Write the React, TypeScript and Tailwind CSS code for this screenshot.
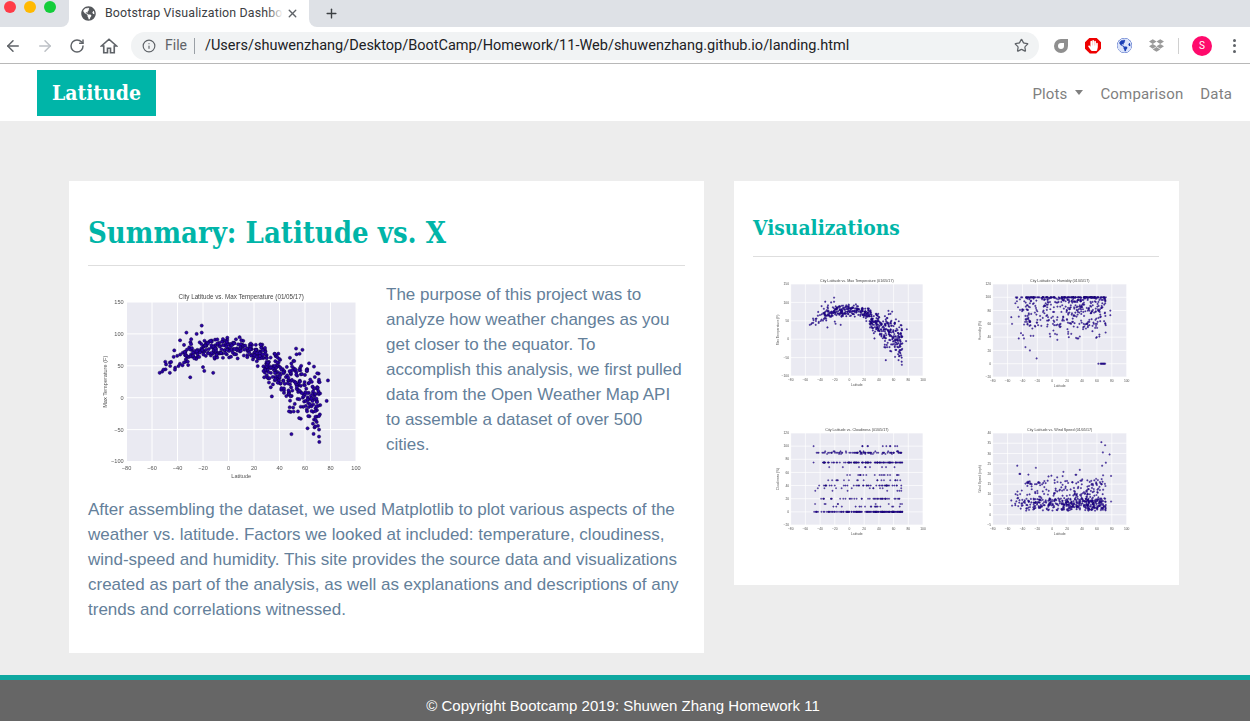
import React from "react";
import { ArrowLeft, ArrowRight, RotateCw, Info, Star, X, Plus } from "lucide-react";
import { FaGlobeAmericas, FaHandPaper, FaDropbox } from "react-icons/fa";

function rng(seed: number) {
  let a = seed;
  return () => {
    a |= 0;
    a = (a + 0x6d2b79f5) | 0;
    let t = Math.imul(a ^ (a >>> 15), 1 | a);
    t = (t + Math.imul(t ^ (t >>> 7), 61 | t)) ^ t;
    return ((t ^ (t >>> 14)) >>> 0) / 4294967296;
  };
}
type P = [number, number];
function gauss(r: () => number) {
  return r() + r() + r() + r() - 2;
}
function lats(r: () => number, n: number) {
  const out: number[] = [];
  for (let i = 0; i < n; i++) {
    const u = r();
    if (u < 0.05) out.push(-50 + r() * 17);
    else if (u < 0.35) out.push(-36 + r() * 46);
    else if (u < 0.6) out.push(10 + r() * 28);
    else out.push(38 + r() * 34);
  }
  return out;
}
const tempCurve: P[] = [[-56, 38], [-45, 55], [-35, 68], [-20, 76], [0, 79], [15, 78], [25, 68], [35, 47], [45, 28], [55, 20], [65, 5], [73, -8]];
function curve(x: number) {
  for (let i = 1; i < tempCurve.length; i++) {
    const [a, b] = tempCurve[i - 1];
    const [c, d] = tempCurve[i];
    if (x <= c) return b + ((x - a) / (c - a)) * (d - b);
  }
  return -10;
}
function tempData(): P[] {
  const r = rng(7);
  const pts: P[] = lats(r, 500).map((x) => {
    const s = x < 22 ? 15 : x < 45 ? 24 : 46;
    return [x, curve(x) + gauss(r) * s];
  });
  return pts.concat([[-21, 113], [-33, 102], [-25, 100], [-21, 102], [-38, 90], [53, 77], [58, 75], [78, 27], [77, -5], [71, -61], [-30, 32], [-12, 39], [-19, 42], [-20, 48], [-54, 39], [-52, 41], [-51, 44], [-46, 39], [-46, 55], [-45, 56], [-43, 64], [-42, 44], [34, 2], [48, -15], [57, 50], [71, -50], [68, -45], [62, -48]]);
}
function humidityData(): P[] {
  const r = rng(11);
  const pts: P[] = lats(r, 500).map((x) => {
    const u = r();
    const h = u < 0.22 ? 100 : u < 0.85 ? 100 - Math.pow(r(), 1.4) * 45 : 100 - r() * 65;
    return [x, Math.round(h)];
  });
  return pts.concat([[62, 0], [65, 0], [66, 0], [67, 0], [68, 0], [69, 0], [70, 0], [71, 0], [-21, 8], [-30, 20], [-36, 25], [-45, 38], [-42, 46], [-38, 38], [-55, 70], [-54, 60], [-47, 100], [-46, 85], [78, 73], [78, 80], [72, 100]]);
}
function cloudData(): P[] {
  const r = rng(23);
  const vals = [0, 0, 0, 0, 0, 0, 0, 0, 8, 12, 20, 20, 20, 32, 36, 40, 40, 40, 48, 56, 68, 75, 75, 75, 75, 75, 75, 90, 90, 90, 90, 92, 88, 100];
  return lats(r, 520).map((x) => [x, vals[Math.floor(r() * vals.length)]]);
}
function windData(): P[] {
  const r = rng(31);
  const pts: P[] = lats(r, 540).map((x) => {
    const u = r();
    const w = u < 0.58 ? 2 + r() * 6 : u < 0.95 ? 4 + r() * 13 : 10 + r() * 10;
    return [x, w];
  });
  return pts.concat([[66, 35.5], [71, 34], [68, 30.5], [77, 29.5], [79, 19], [-47, 24], [-44, 20], [-43, 20], [-22, 23], [-55, 7], [-54, 4.5], [72, 25.5], [67, 24], [79, 6.5], [15, 21], [37, 22]]);
}

type ChartProps = {
  w: number;
  h: number;
  box: [number, number, number, number];
  xr: [number, number];
  yr: [number, number];
  xt: number[];
  yt: number[];
  title: string;
  yl: string;
  data: P[];
  dot: number;
  fs: number;
  op?: number;
  blur: string;
};
function Chart({ w, h, box, xr, yr, xt, yt, title, yl, data, dot, fs, op = 1, blur }: ChartProps) {
  const [l, t, pw, ph] = box;
  const sx = (x: number) => l + ((x - xr[0]) / (xr[1] - xr[0])) * pw;
  const sy = (y: number) => t + ph - ((y - yr[0]) / (yr[1] - yr[0])) * ph;
  return (
    <svg width={w} height={h} viewBox={`0 0 ${w} ${h}`} className={blur} style={{ fontFamily: "'Liberation Sans', sans-serif" }}>
      <rect x={l} y={t} width={pw} height={ph} fill="#eaeaf2" />
      {xt.map((v) => (
        <line key={v} x1={sx(v)} x2={sx(v)} y1={t} y2={t + ph} stroke="#fff" strokeWidth={fs > 5 ? 1 : 0.7} />
      ))}
      {yt.map((v) => (
        <line key={v} x1={l} x2={l + pw} y1={sy(v)} y2={sy(v)} stroke="#fff" strokeWidth={fs > 5 ? 1 : 0.7} />
      ))}
      {data.map(([x, y], i) => (
        <circle key={i} cx={sx(x)} cy={sy(y)} r={dot} fill="#2a00a8" stroke="#0c0040" strokeWidth={dot * 0.3} opacity={op} />
      ))}
      {xt.map((v) => (
        <text key={v} x={sx(v)} y={t + ph + fs * 1.5} fontSize={fs} fill="#555" textAnchor="middle">
          {v < 0 ? `\u2212${-v}` : v}
        </text>
      ))}
      {yt.map((v) => (
        <text key={v} x={l - fs * 0.5} y={sy(v) + fs * 0.35} fontSize={fs} fill="#555" textAnchor="end">
          {v < 0 ? `\u2212${-v}` : v}
        </text>
      ))}
      <text x={l + pw / 2} y={t - fs * 0.55} fontSize={fs * 1.12} fill="#444" textAnchor="middle">
        {title}
      </text>
      <text x={l + pw / 2} y={t + ph + fs * 3} fontSize={fs} fill="#555" textAnchor="middle">
        Latitude
      </text>
      <text transform={`translate(${l - fs * 3.5} ${t + ph / 2}) rotate(-90)`} fontSize={fs} fill="#555" textAnchor="middle">
        {yl}
      </text>
    </svg>
  );
}

const xTicks = [-80, -60, -40, -20, 0, 20, 40, 60, 80, 100];
const yTemp = [-100, -50, 0, 50, 100, 150];
const yPct = [-20, 0, 20, 40, 60, 80, 100, 120];
const yWind = [-5, 0, 5, 10, 15, 20, 25, 30, 35, 40];
const temp = tempData();
const hum = humidityData();
const cloud = cloudData();
const wind = windData();

const serif = "font-['DejaVu_Serif',serif] [font-stretch:condensed]";
const smallBlur = "blur-[0.4px]";

function Light({ c }: { c: string }) {
  return <div className={`w-3 h-3 rounded-full ${c}`} />;
}

export default function App() {
  return (
    <div className="w-[1250px] h-screen overflow-hidden flex flex-col bg-[#ededed] font-['Liberation_Sans',sans-serif]">
      {/* browser chrome */}
      <div className="h-[27px] flex bg-white shrink-0">
        <div className="w-[69px] bg-[#dee1e6] rounded-br-[8px] flex gap-2 pl-1 pt-px">
          <Light c="bg-[#ff3b47]" />
          <Light c="bg-[#ffb900]" />
          <Light c="bg-[#13cd3a]" />
        </div>
        <div className="w-[240px] flex items-center pl-3 pr-[10px] font-['Roboto',sans-serif] text-[12.4px] tracking-[0.15px] text-[#3c4043]">
          <FaGlobeAmericas className="text-[#55585c] w-[15px] h-[15px] mr-[9px] shrink-0" />
          <div className="whitespace-nowrap relative">
            <span>Bootstrap Visualization Dashbo</span>
            <div className="absolute right-0 top-0 bottom-0 w-4 bg-gradient-to-r from-transparent to-white" />
          </div>
          <X className="w-[13px] h-[13px] ml-auto text-[#5f6368] shrink-0" strokeWidth={2.5} />
        </div>
        <div className="flex-1 bg-[#dee1e6] rounded-bl-[8px] flex items-center pl-[15px]">
          <Plus className="w-[15px] h-[15px] text-[#3c4043]" strokeWidth={2.2} />
        </div>
      </div>
      <div className="h-[37px] flex items-center bg-white border-b border-[#b8b8b8] shrink-0 pl-[4px] pt-px">
        <ArrowLeft className="w-[18px] h-[18px] text-[#5f6368]" strokeWidth={2} />
        <ArrowRight className="w-[18px] h-[18px] text-[#bdc1c6] ml-[14px]" strokeWidth={2} />
        <RotateCw className="w-[16px] h-[16px] text-[#5f6368] ml-[15px]" strokeWidth={2.2} />
        <svg className="ml-[15px]" width="18" height="18" viewBox="0 0 24 24" fill="none" stroke="#5f6368" strokeWidth="2.2" strokeLinejoin="miter">
          <path d="M10 21v-6h4v6h5v-9h3L12 3 2 12h3v9z" />
        </svg>
        <div className="ml-[13px] w-[908px] h-[28px] bg-[#f1f3f4] rounded-full flex items-center pl-[11px] pr-[10px] font-['Roboto',sans-serif]">
          <Info className="w-[14px] h-[14px] text-[#5f6368]" strokeWidth={2} />
          <span className="ml-[9px] text-[14px] text-[#5f6368]">File</span>
          <span className="ml-[7px] w-px h-4 bg-[#9aa0a6]" />
          <span className="ml-[10px] text-[14.5px] text-[#202124] whitespace-nowrap">/Users/shuwenzhang/Desktop/BootCamp/Homework/11-Web/shuwenzhang.github.io/landing.html</span>
          <Star className="ml-auto w-[15px] h-[15px] text-[#5f6368]" strokeWidth={2} />
        </div>
        <div className="ml-[14px] w-4 h-4 flex items-center justify-center">
          <svg width="16" height="16" viewBox="0 0 16 16">
            <path d="M1 8a7 7 0 0 1 7-7h7v7a7 7 0 0 1-14 0z" fill="#8f8f8f" />
            <path d="M5 8a3 3 0 0 1 3-3h3v3a3 3 0 0 1-6 0z" fill="#fff" />
          </svg>
        </div>
        <div className="ml-4 w-4 h-4 flex items-center justify-center bg-[#ee0000] [clip-path:polygon(30%_0,70%_0,100%_30%,100%_70%,70%_100%,30%_100%,0_70%,0_30%)]">
          <FaHandPaper className="w-[10px] h-[11px] text-white" />
        </div>
        <div className="ml-4 w-[15px] h-[15px] rounded-full bg-[#1a3fb5] overflow-hidden flex items-center justify-center">
          <FaGlobeAmericas className="w-[15px] h-[15px] text-[#dbe4fa]" />
        </div>
        <FaDropbox className="ml-[17px] w-[15px] h-[15px] text-[#9a9a9a]" />
        <div className="ml-[14px] w-px h-4 bg-[#d0d0d0]" />
        <div className="ml-[13px] w-5 h-5 rounded-full bg-[#ff0a6c] text-white text-[10px] flex items-center justify-center font-['Roboto',sans-serif]">S</div>
        <div className="ml-[21px] flex flex-col gap-[2.5px]">
          <div className="w-[3px] h-[3px] rounded-full bg-[#5f6368]" />
          <div className="w-[3px] h-[3px] rounded-full bg-[#5f6368]" />
          <div className="w-[3px] h-[3px] rounded-full bg-[#5f6368]" />
        </div>
      </div>

      {/* navbar */}
      <nav className="h-[57px] bg-white shrink-0 flex items-start pt-[6px] pl-[37px] pr-[18px]">
        <div className={`w-[119px] h-[46px] bg-[#00b5a8] text-white flex items-center justify-center text-[21px] font-bold ${serif}`}>Latitude</div>
        <div className="ml-auto h-[46px] pt-[2px] flex items-center text-[15px] text-[#808080] font-['Roboto',sans-serif] tracking-[0.15px]">
          <span>Plots</span>
          <span className="ml-[8px] w-0 h-0 border-x-[4.5px] border-x-transparent border-t-[5px] border-t-[#808080] mb-[3px]" />
          <span className="ml-[17px]">Comparison</span>
          <span className="ml-[17px]">Data</span>
        </div>
      </nav>

      {/* content */}
      <main className="flex-1 flex items-start gap-[30px] pt-[60px] pl-[69px]">
        <section className="w-[635px] h-[472px] bg-white pl-[19px] pr-[19px] pt-[32px]">
          <h1 className={`text-[29px] leading-[40px] font-bold text-[#00b5a8] ${serif}`}>Summary: Latitude vs. X</h1>
          <hr className="mt-[12px] border-[#dedede]" />
          <div className="flex mt-[16px] text-[#64809a] text-[17px] leading-[25px]">
            <div className="w-[298px] h-[215px] shrink-0">
              <Chart
                w={298}
                h={215}
                box={[38.5, 20, 229.5, 159.5]}
                xr={[-80, 100]}
                yr={[-100, 150]}
                xt={xTicks}
                yt={yTemp}
                title="City Latitude vs. Max Temperature (01/05/17)"
                yl="Max Temperature (F)"
                data={temp}
                dot={1.6}
                fs={5.6}
                blur="blur-[0.35px]"
              />
            </div>
            <p>
              The purpose of this project was to analyze how weather changes as you get closer to the equator. To accomplish this analysis, we first pulled data from the Open Weather Map API to assemble a dataset of over 500 cities.
            </p>
          </div>
          <p className="text-[#64809a] text-[17px] leading-[25px]">
            After assembling the dataset, we used Matplotlib to plot various aspects of the weather vs. latitude. Factors we looked at included: temperature, cloudiness, wind-speed and humidity. This site provides the source data and visualizations created as part of the analysis, as well as explanations and descriptions of any trends and correlations witnessed.
          </p>
        </section>
        <aside className="w-[445px] h-[404px] bg-white pl-[19px] pr-[20px] pt-[32px]">
          <h2 className={`text-[20.8px] leading-[30px] font-bold text-[#00b5a8] ${serif}`}>Visualizations</h2>
          <hr className="mt-[13px] border-[#dedede]" />
          <div className="grid grid-cols-2 mt-[13px]">
            <Chart w={203} h={150} box={[37.7, 14, 132.3, 92]} xr={[-80, 100]} yr={[-100, 150]} xt={xTicks} yt={yTemp} title="City Latitude vs. Max Temperature (01/05/17)" yl="Max Temperature (F)" data={temp} dot={0.85} fs={3.3} op={0.85} blur={smallBlur} />
            <Chart w={203} h={150} box={[36.7, 14, 134, 93]} xr={[-80, 100]} yr={[-20, 120]} xt={xTicks} yt={yPct} title="City Latitude vs. Humidity (01/05/17)" yl="Humidity (%)" data={hum} dot={0.85} fs={3.3} op={0.8} blur={smallBlur} />
            <Chart w={203} h={150} box={[37.7, 13, 132.3, 92]} xr={[-80, 100]} yr={[-20, 120]} xt={xTicks} yt={yPct} title="City Latitude vs. Cloudiness (01/05/17)" yl="Cloudiness (%)" data={cloud} dot={0.8} fs={3.3} op={0.8} blur={smallBlur} />
            <Chart w={203} h={150} box={[36.7, 13, 134, 92]} xr={[-80, 100]} yr={[-5, 40]} xt={xTicks} yt={yWind} title="City Latitude vs. Wind Speed (01/05/17)" yl="Wind Speed (mph)" data={wind} dot={0.85} fs={3.3} op={0.8} blur={smallBlur} />
          </div>
        </aside>
      </main>

      {/* footer */}
      <footer className="h-[46px] shrink-0 bg-[#666666] border-t-[5px] border-[#0fa8a0] flex items-center justify-center pt-[11px] pr-[4px] text-white text-[15px]">
        © Copyright Bootcamp 2019: Shuwen Zhang Homework 11
      </footer>
    </div>
  );
}
